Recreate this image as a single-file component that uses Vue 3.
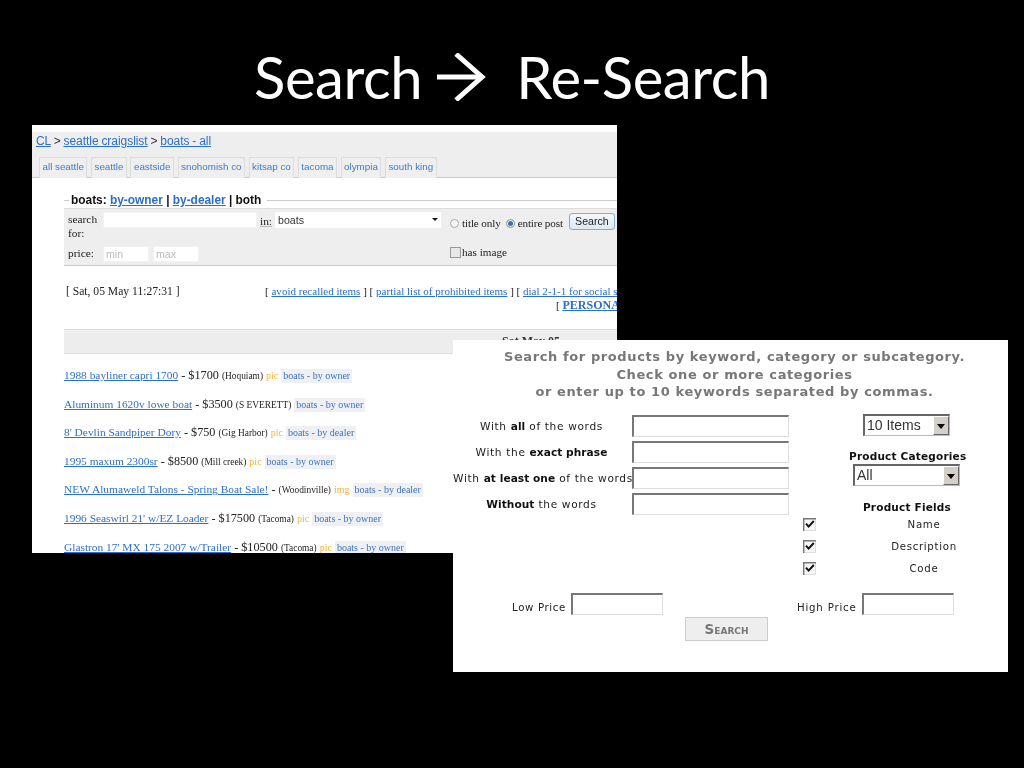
<script setup>
const tabs = ['all seattle', 'seattle', 'eastside', 'snohomish co', 'kitsap co', 'tacoma', 'olympia', 'south king']
const posts = [
  { t: '1988 bayliner capri 1700', p: ' - $1700 ', l: '(Hoquiam)', m: 'pic', c: 'boats - by owner' },
  { t: 'Aluminum 1620v lowe boat', p: ' - $3500 ', l: '(S EVERETT)', m: '', c: 'boats - by owner' },
  { t: "8' Devlin Sandpiper Dory", p: ' - $750 ', l: '(Gig Harbor)', m: 'pic', c: 'boats - by dealer' },
  { t: '1995 maxum 2300sr', p: ' - $8500 ', l: '(Mill creek)', m: 'pic', c: 'boats - by owner' },
  { t: 'NEW Alumaweld Talons - Spring Boat Sale!', p: ' - ', l: '(Woodinville)', m: 'img', c: 'boats - by dealer' },
  { t: "1996 Seaswirl 21' w/EZ Loader", p: ' - $17500 ', l: '(Tacoma)', m: 'pic', c: 'boats - by owner' },
  { t: 'Glastron 17\' MX 175 2007 w/Trailer', p: ' - $10500 ', l: '(Tacoma)', m: 'pic', c: 'boats - by owner' },
]
const wordRows = [
  { id: 'all', a: 'With ', b: 'all', c: ' of the words' },
  { id: 'exact', a: 'With the ', b: 'exact phrase', c: '' },
  { id: 'least', a: 'With ', b: 'at least one', c: ' of the words' },
  { id: 'without', a: '', b: 'Without', c: ' the words' },
]
const fields = ['Name', 'Description', 'Code']
</script>

<template>
  <main class="slide">
    <h1 class="title">
      <span>Search</span>
      <svg class="arrow" width="50" height="48" viewBox="0 0 50 48" aria-hidden="true">
        <path d="M0 24H43" fill="none" stroke="#fff" stroke-width="5" />
        <path d="M19 1L45 24L19 47" fill="none" stroke="#fff" stroke-width="5" />
      </svg>
      <span>Re-Search</span>
    </h1>

    <section class="shot craigslist">
      <header class="cl-head">
        <div class="crumbs"><a>CL</a> &gt; <a>seattle craigslist</a> &gt; <a>boats - all</a></div>
        <nav class="tabs"><a v-for="t in tabs" :key="t" class="tab">{{ t }}</a></nav>
      </header>

      <div class="cl-body">
        <div class="legend-row">
          <span class="legend-tick"></span>
          <span class="legend">boats: <a>by-owner</a> | <a>by-dealer</a> | both</span>
          <span class="legend-rule"></span>
        </div>
        <div class="search-box">
          <div class="sb-row sb-top">
            <span class="sb-label">search for:</span>
            <span class="cl-input query"></span>
            <span class="in-label">in:</span>
            <span class="cl-select">boats<i class="tri"></i></span>
            <span class="radio"></span><span class="opt">title only</span>
            <span class="radio on"></span><span class="opt">entire post</span>
            <span class="cl-btn">Search</span>
          </div>
          <div class="sb-row sb-bottom">
            <span class="sb-label">price:</span>
            <span class="cl-input small">min</span>
            <span class="cl-input small">max</span>
            <span class="has-image"><span class="cl-check"></span>has image</span>
          </div>
        </div>

        <div class="notice">
          <span class="date">[ Sat, 05 May 11:27:31 ]</span>
          <div class="notice-links">
            <div>[ <a>avoid recalled items</a> ] [ <a>partial list of prohibited items</a> ] [ <a>dial 2-1-1 for social services</a> ]</div>
            <div>[ <a class="strong">PERSONAL SAFETY TIPS</a> ]</div>
          </div>
        </div>

        <div class="date-bar">Sat May 05</div>

        <ul class="posts">
          <li v-for="p in posts" :key="p.t">
            <a>{{ p.t }}</a><span class="amount">{{ p.p }}</span><small>{{ p.l }}</small>
            <em v-if="p.m">{{ p.m }}</em>
            <span class="cat">{{ p.c }}</span>
          </li>
        </ul>
      </div>
    </section>

    <section class="shot product">
      <p class="intro">Search for products by keyword, category or subcategory.<br>Check one or more categories<br>or enter up to 10 keywords separated by commas.</p>

      <div class="form-grid">
        <div class="words">
          <div v-for="r in wordRows" :key="r.id" class="word-row">
            <span class="word-label">{{ r.a }}<b>{{ r.b }}</b>{{ r.c }}</span>
            <span class="p-input wide"></span>
          </div>
        </div>

        <div class="options">
          <span class="p-select items">10 Items<i class="drop"></i></span>
          <b class="opt-title cat-title">Product Categories</b>
          <span class="p-select cats">All<i class="drop"></i></span>
          <b class="opt-title fields-title">Product Fields</b>
          <div v-for="f in fields" :key="f" class="field-row">
            <svg class="p-check" width="13" height="13" viewBox="0 0 13 13" aria-hidden="true">
              <rect x="0" y="0" width="13" height="13" fill="#f6f6f6" />
              <path d="M12.5 0V12.5H0" fill="none" stroke="#ddd" />
              <path d="M.7 13V.7H13" fill="none" stroke="#777" stroke-width="1.4" />
              <path d="M3 5.6l2.6 3L10.8 3" fill="none" stroke="#111" stroke-width="2" />
            </svg>
            <span class="field-name">{{ f }}</span>
          </div>
        </div>
      </div>

      <div class="prices">
        <label class="price low">Low Price <span class="p-input price-input"></span></label>
        <label class="price high">High Price <span class="p-input price-input"></span></label>
      </div>
      <div class="submit-row"><span class="p-btn">Search</span></div>
    </section>
  </main>
</template>

<style scoped>
.slide { position: relative; width: 1024px; height: 768px; background: #000; overflow: hidden; }
.title { margin: 0; height: 125px; box-sizing: border-box; padding: 39px 0 0 254px; display: flex; align-items: flex-start; color: #fff; font: 400 58px/76px Lato, "Open Sans", sans-serif; letter-spacing: -.4px; }
.arrow { flex: none; margin: 14px 29px 0 15px; }

.shot { position: absolute; background: #fff; overflow: hidden; filter: blur(.35px); }
.craigslist { left: 32px; top: 125px; width: 585px; height: 428px; font-family: "Liberation Serif", serif; font-size: 12px; color: #222; }
.product { left: 453px; top: 340px; width: 555px; height: 332px; font-family: "DejaVu Sans", sans-serif; color: #222; }

a { color: #2a6fc9; text-decoration: underline; }
.cl-head { margin-top: 7px; height: 46px; box-sizing: border-box; padding: 1px 0 0 4px; background: #eee; border-bottom: 1px solid #ccc; font-family: "Liberation Sans", sans-serif; }
.crumbs { height: 24px; line-height: 17px; font-size: 12px; color: #333; word-spacing: -.4px; letter-spacing: -.05px; }
.tabs { display: flex; gap: 3.6px; margin-left: 3px; }
.tab { height: 21px; box-sizing: border-box; padding: 0 2.5px; line-height: 18px; font-size: 9.8px; color: #3f7bcb; text-decoration: none; border: 1px solid #ddd; border-bottom: 0; background: #efefef; }

.cl-body { padding-left: 32px; }
.legend-row { display: flex; align-items: center; margin-top: 14px; height: 16px; }
.legend-tick { flex: none; width: 5px; height: 1px; background: #ccc; }
.legend { flex: none; padding: 0 6px 0 2px; font: 700 11.9px/16px "Liberation Sans", sans-serif; color: #111; }
.legend-rule { flex: 1; height: 1px; background: #ccc; }
.search-box { width: 600px; height: 58px; box-sizing: border-box; background: #eee; border-bottom: 1px solid #ccc; border-top: 1px solid #ddd; padding-left: 4px; }
.sb-row { display: flex; align-items: flex-start; }
.sb-top { height: 37px; padding-top: 3px; box-sizing: border-box; }
.sb-label { width: 35px; font-size: 11.4px; line-height: 14px; }
.cl-input { box-sizing: border-box; height: 16px; background: #fff; border: 1px solid #f2f2f2; }
.query { width: 154px; }
.in-label { margin: 3px 3px 0 3px; font-size: 11.4px; line-height: 13px; text-decoration: underline; text-decoration-color: #bbb; }
.cl-select { position: relative; width: 166px; height: 16px; box-sizing: border-box; padding-left: 3px; background: #fff; font: 10.6px/17px "Liberation Sans", sans-serif; color: #333; }
.tri { position: absolute; right: 3px; top: 6px; border: 3px solid transparent; border-top: 3px solid #111; border-bottom: 0; }
.radio { box-sizing: border-box; width: 9px; height: 9px; margin: 7px 3px 0 9px; border-radius: 50%; border: 1px solid #aaa; background: #f5f5f5; }
.radio.on { margin-left: 5px; background: #3b6fb0; box-shadow: inset 0 0 0 1px #fff; }
.opt { margin-top: 5px; font-size: 11.2px; line-height: 13px; letter-spacing: -.15px; }
.cl-btn { margin: 1px 0 0 6px; box-sizing: border-box; width: 46px; height: 17px; text-align: center; font: 10.6px/14px "Liberation Sans", sans-serif; color: #222; background: linear-gradient(#f4f8fb, #dce8f2); border: 1px solid #7fb0d6; border-radius: 3px; }
.small { width: 46px; margin-right: 4px; padding-left: 2px; font: 10.6px/14px "Liberation Sans", sans-serif; color: #bbb; }
.has-image { display: flex; align-items: center; gap: 1px; margin-left: 247px; font-size: 11.2px; line-height: 13px; }
.cl-check { width: 9px; height: 9px; border: 1px solid #999; background: #e8e8e8; }
.notice { display: flex; width: 600px; height: 63px; box-sizing: border-box; padding: 19px 0 0 2px; font-size: 11.6px; line-height: 14px; }
.date { width: 199px; flex: none; color: #222; }
.notice-links { width: 420px; margin-top: -1px; white-space: nowrap; font-size: 11.05px; }
.notice-links div:last-child { margin-left: 291px; }
.strong { font-weight: 700; font-size: 12px; }
.date-bar { width: 600px; height: 25px; box-sizing: border-box; padding: 4px 0 0 438px; line-height: 14px; background: #ededed; border-top: 1px solid #ddd; border-bottom: 1px solid #ddd; font-size: 12px; font-weight: 700; color: #333; }
.posts { margin: 14px 0 0; padding: 0; list-style: none; font-size: 11.4px; line-height: 14px; white-space: nowrap; color: #222; }
.posts li { height: 28.6px; }
.posts a { color: #2d70c8; }
.amount { font-size: 12.2px; white-space: pre; }
small { font-size: 9.4px; }
em { margin-left: 3px; font-style: normal; font-size: 10px; color: #f5b33d; }
.cat { margin-left: 3px; padding: 1px 2px 2px; background: #eef0f4; color: #3f74bd; font: 10px/13px "Liberation Serif", serif; }

.intro { margin: 8px 0 0; padding-left: 8px; text-align: center; font-size: 13px; font-weight: 700; line-height: 17.5px; letter-spacing: .6px; color: #777; }
.form-grid { display: flex; height: 175px; margin-top: 13px; }
.words { width: 350px; margin-top: -1px; }
.word-row { display: flex; align-items: center; height: 26px; }
.word-label { flex: none; width: 177px; margin-right: 2px; text-align: center; font-size: 10.6px; letter-spacing: .65px; white-space: nowrap; color: #222; }
.word-label b { color: #111; letter-spacing: .05px; }
.p-input { display: block; box-sizing: border-box; background: #fff; border: 1px solid #ddd; border-top: 2px solid #777; border-left: 2px solid #777; }
.wide { width: 157px; height: 22px; }
.options { width: 205px; display: flex; flex-direction: column; }
.p-select { position: relative; display: block; flex: none; box-sizing: border-box; height: 22px; border: 1px solid #bbb; border-top: 2px solid #666; border-left: 2px solid #666; padding-left: 2px; font: 14px/18px "Liberation Sans", sans-serif; color: #333; }
.items { width: 87px; margin-left: 60px; }
.cats { width: 107px; margin-left: 50px; }
.drop { position: absolute; right: 0; top: 0; width: 16px; height: 19px; box-sizing: border-box; background: #d4d0c8; border: 1px solid #fff; border-right-color: #666; border-bottom-color: #666; }
.drop::after { content: ""; position: absolute; left: 3px; top: 7px; border: 4px solid transparent; border-top: 5px solid #000; border-bottom: 0; }
.opt-title { display: block; flex: none; font-size: 10.5px; letter-spacing: .2px; color: #111; text-align: center; }
.cat-title { margin: 14px 0 0 46px; width: 112px; height: 14px; line-height: 12px; white-space: nowrap; }
.fields-title { margin: 14px 0 0 59px; width: 90px; height: 14px; line-height: 14px; white-space: nowrap; }
.field-row { display: flex; flex: none; align-items: center; height: 22px; font-size: 10.2px; letter-spacing: .7px; }
.field-name { flex: none; width: 160px; margin-left: 28px; text-align: center; }
.prices { display: flex; height: 22px; margin-top: 4px; font-size: 10.2px; letter-spacing: .65px; color: #222; }
.price { display: flex; align-items: flex-end; gap: 5px; white-space: nowrap; line-height: 14px; }
.low { margin-left: 59px; }
.high { margin-left: 134px; letter-spacing: .8px; }
.price-input { width: 92px; height: 22px; }
.submit-row { display: flex; justify-content: center; margin-top: 2px; padding-right: 8px; }
.p-btn { width: 83px; height: 24px; box-sizing: border-box; border: 1px solid #ccc; background: #eee; text-align: center; font: 700 13.5px/23px "DejaVu Sans", sans-serif; font-variant: small-caps; color: #777; }
</style>

<style>
html, body { margin: 0; background: #000; }
</style>
